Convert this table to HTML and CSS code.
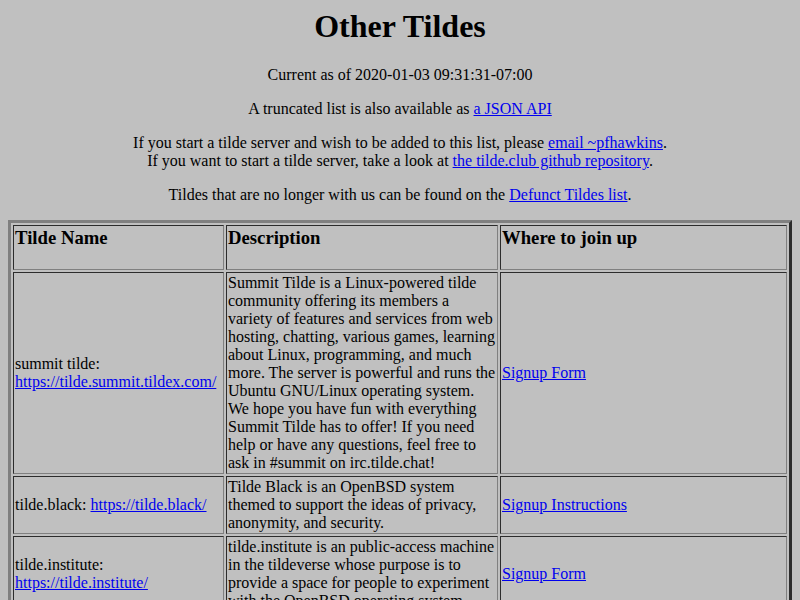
FILE: index.html
```html
<!DOCTYPE html>
<html>
<head>
<meta charset="utf-8">
<title>Other Tildes</title>
<link rel="stylesheet" href="styles.css">
</head>
<body>
<h1 class="title">Other Tildes</h1>
<p class="center">Current as of 2020-01-03 09:31:31-07:00</p>
<p class="center">A truncated list is also available as <a href="#">a JSON API</a></p>
<p class="center">If you start a tilde server and wish to be added to this list, please <a href="#">email ~pfhawkins</a>.<br>If you want to start a tilde server, take a look at <a href="#">the tilde.club github repository</a>.</p>
<p class="center">Tildes that are no longer with us can be found on the <a href="#">Defunct Tildes list</a>.</p>
<table class="tildes">
<colgroup>
<col class="c-name">
<col class="c-desc">
<col class="c-join">
</colgroup>
<tr>
<th><h3 class="hd">Tilde Name</h3></th>
<th><h3 class="hd">Description</h3></th>
<th><h3 class="hd">Where to join up</h3></th>
</tr>
<tr>
<td>summit tilde: <a href="#">https://tilde.summit.tildex.com/</a></td>
<td>Summit Tilde is a Linux-powered tilde community offering its members a variety of features and services from web hosting, chatting, various games, learning about Linux, programming, and much more. The server is powerful and runs the Ubuntu GNU/Linux operating system. We hope you have fun with everything Summit Tilde has to offer! If you need help or have any questions, feel free to ask in #summit on irc.tilde.chat!</td>
<td><a href="#">Signup Form</a></td>
</tr>
<tr>
<td>tilde.black: <a href="#">https://tilde.black/</a></td>
<td>Tilde Black is an OpenBSD system themed to support the ideas of privacy, anonymity, and security.</td>
<td><a href="#">Signup Instructions</a></td>
</tr>
<tr>
<td>tilde.institute: <a href="#">https://tilde.institute/</a></td>
<td>tilde.institute is an public-access machine in the tildeverse whose purpose is to provide a space for people to experiment with the OpenBSD operating system.</td>
<td><a href="#">Signup Form</a></td>
</tr>
</table>
</body>
</html>
```
FILE: styles.css
```css
html {
  background: #c0c0c0;
}
body {
  margin: 8px;
  font-family: "Liberation Serif", "Times New Roman", serif;
  font-size: 16px;
  color: #000;
  background: #c0c0c0;
}
a {
  color: #0000ee;
}
.title {
  text-align: center;
  font-size: 32px;
  font-weight: bold;
  margin: 0 0 21.44px;
}
.center {
  text-align: center;
  margin: 16px 0;
}
.tildes {
  width: 100%;
  table-layout: fixed;
  border: 3px outset #808080;
  border-spacing: 2px;
}
.c-name { width: 211px; }
.c-desc { width: 272px; }
.tildes th,
.tildes td {
  border: 1px inset #808080;
  padding: 1px;
  text-align: left;
}
.tildes th {
  vertical-align: top;
}
.tildes td {
  vertical-align: middle;
}
.hd {
  font-size: 18.72px;
  font-weight: bold;
  margin: 0 0 18.72px;
}
```
